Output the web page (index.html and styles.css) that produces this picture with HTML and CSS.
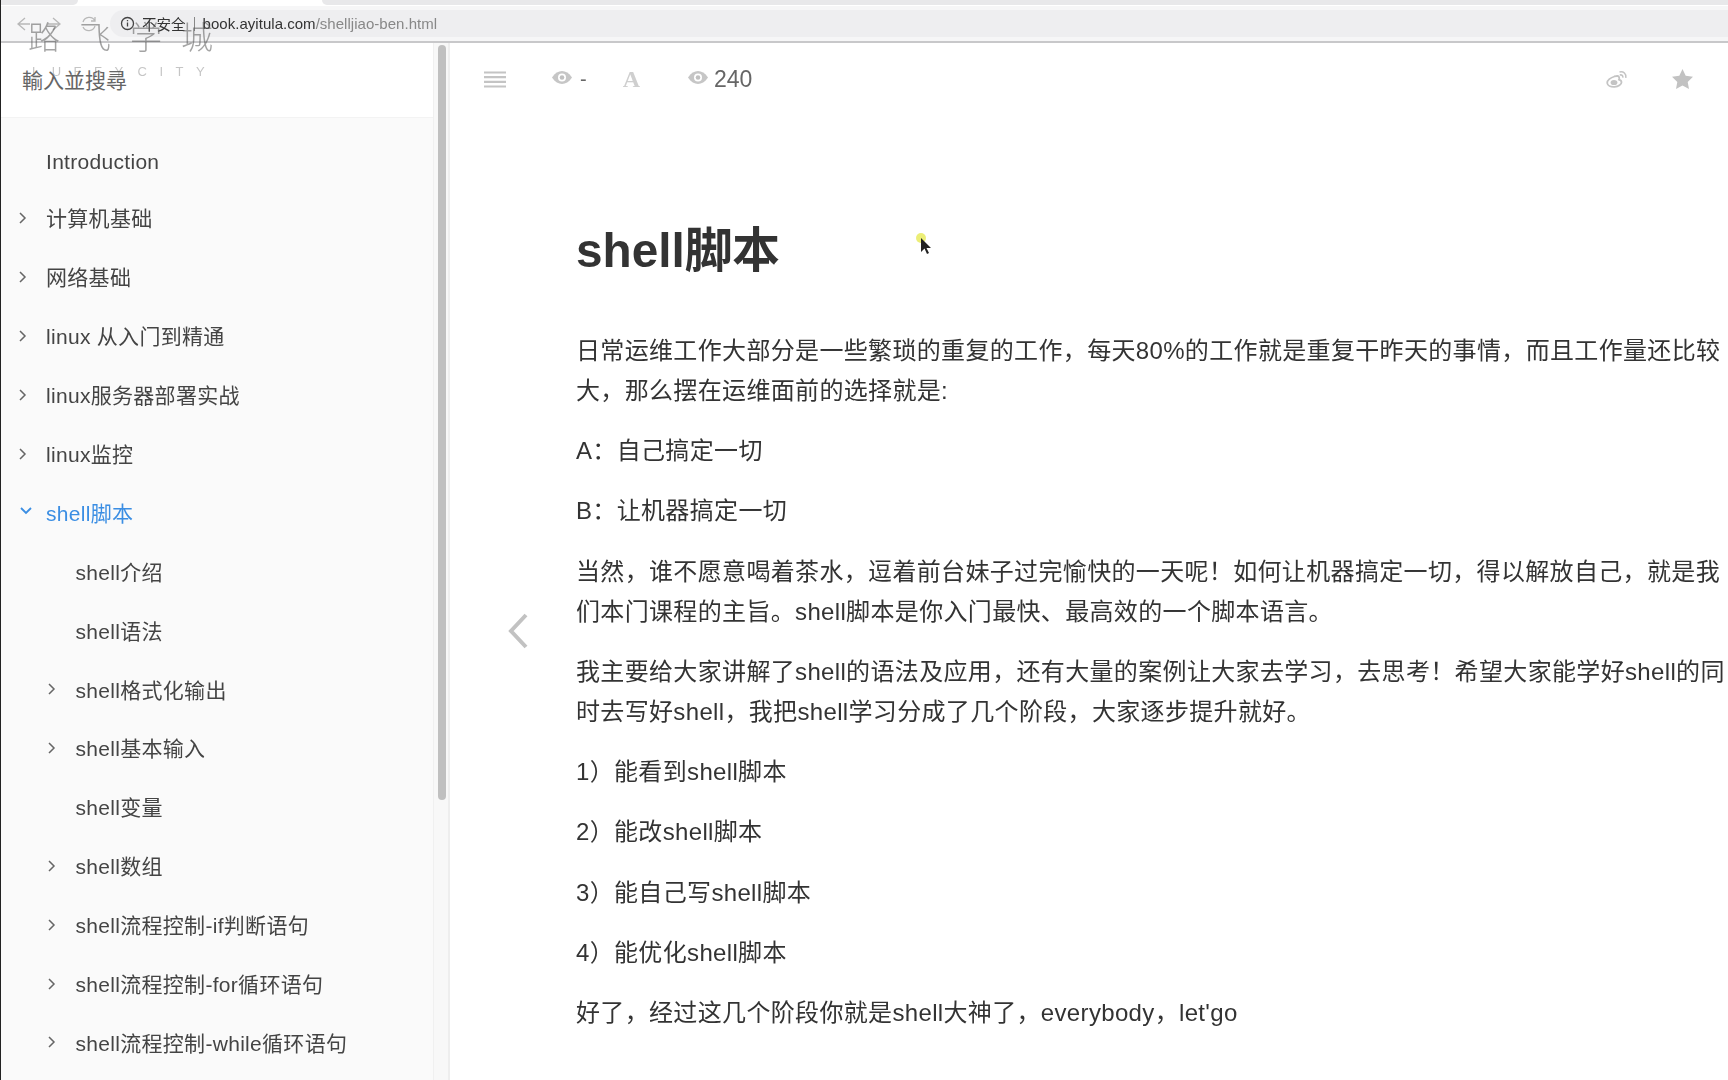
FILE: index.html
```html
<!DOCTYPE html>
<html lang="zh">
<head>
<meta charset="utf-8">
<title>shell脚本</title>
<link rel="stylesheet" href="styles.css">
</head>
<body>
<header class="chrome">
  <div class="tabstrip"><span class="tab tab-a"></span><span class="tab tab-b"></span></div>
  <div class="toolbar">
    <div class="navbtns">
      <svg class="nav-ic" width="46" height="16" viewBox="0 0 46 16"><path d="M9 2 2 8l7 6M2 8h12M37 2l7 6-7 6M44 8H32" fill="none" stroke="#b8b8b8" stroke-width="1.3"/></svg>
      <svg class="nav-ic" width="18" height="16" viewBox="0 0 18 16"><path d="M15 5A6.5 6.5 0 0 0 3 6M15 1v4h-4M3 11a6.500 6.500 0 0 0 12-1" fill="none" stroke="#b8b8b8" stroke-width="1.3"/></svg>
    </div>
    <div class="omnibox">
      <svg width="15" height="15" viewBox="0 0 15 15"><circle cx="7.500" cy="7.500" r="6" fill="none" stroke="#444" stroke-width="1.300"/><path d="M7.500 6.500v4M7.500 4v1.300" stroke="#444" stroke-width="1.300"/></svg>
      <span class="insecure">不安全</span><span class="sep"></span>
      <span class="url"><b>book.ayitula.com</b>/shelljiao-ben.html</span>
    </div>
  </div>
</header>

<div class="book">
  <aside class="sidebar">
    <div class="search">輸入並搜尋</div>
    <ul class="summary">
      <li class="item first"><span class="label">Introduction</span></li>
      <li class="item has"><svg class="chev" viewBox="0 0 10 14"><path d="M2 2l5 5-5 5"/></svg><span class="label">计算机基础</span></li>
      <li class="item has"><svg class="chev" viewBox="0 0 10 14"><path d="M2 2l5 5-5 5"/></svg><span class="label">网络基础</span></li>
      <li class="item has"><svg class="chev" viewBox="0 0 10 14"><path d="M2 2l5 5-5 5"/></svg><span class="label">linux 从入门到精通</span></li>
      <li class="item has"><svg class="chev" viewBox="0 0 10 14"><path d="M2 2l5 5-5 5"/></svg><span class="label">linux服务器部署实战</span></li>
      <li class="item has"><svg class="chev" viewBox="0 0 10 14"><path d="M2 2l5 5-5 5"/></svg><span class="label">linux监控</span></li>
      <li class="item has active"><svg class="chev down" viewBox="0 0 14 10"><path d="M2 2l5 5 5-5"/></svg><span class="label">shell脚本</span></li>
      <li class="item sub"><span class="label">shell介绍</span></li>
      <li class="item sub"><span class="label">shell语法</span></li>
      <li class="item sub has"><svg class="chev" viewBox="0 0 10 14"><path d="M2 2l5 5-5 5"/></svg><span class="label">shell格式化输出</span></li>
      <li class="item sub has"><svg class="chev" viewBox="0 0 10 14"><path d="M2 2l5 5-5 5"/></svg><span class="label">shell基本输入</span></li>
      <li class="item sub"><span class="label">shell变量</span></li>
      <li class="item sub has"><svg class="chev" viewBox="0 0 10 14"><path d="M2 2l5 5-5 5"/></svg><span class="label">shell数组</span></li>
      <li class="item sub has"><svg class="chev" viewBox="0 0 10 14"><path d="M2 2l5 5-5 5"/></svg><span class="label">shell流程控制-if判断语句</span></li>
      <li class="item sub has"><svg class="chev" viewBox="0 0 10 14"><path d="M2 2l5 5-5 5"/></svg><span class="label">shell流程控制-for循环语句</span></li>
      <li class="item sub has"><svg class="chev" viewBox="0 0 10 14"><path d="M2 2l5 5-5 5"/></svg><span class="label">shell流程控制-while循环语句</span></li>
    </ul>
  </aside>
  <div class="scrolltrack"><div class="scrollthumb"></div></div>

  <main class="page">
    <div class="topbar">
      <div class="tools">
        <svg class="ic-menu" width="22" height="17" viewBox="0 0 22 17"><path d="M0 1.500h22M0 6.200h22M0 10.800h22M0 15.500h22" stroke="#c4c4c4" stroke-width="2.200"/></svg>
        <span class="stat stat-a">
          <svg width="20" height="13" viewBox="0 0 20 13"><path d="M0 6.500C3 2 6.500 0 10 0s7 2 10 6.500C17 11 13.500 13 10 13S3 11 0 6.500z" fill="#c6c6c6"/><circle cx="10" cy="6.500" r="4" fill="#fff"/><circle cx="10" cy="6.500" r="2.300" fill="#c0c0c0"/></svg>
          <span class="stat-text">-</span>
        </span>
        <span class="font-a">A</span>
        <span class="stat stat-b">
          <svg width="20" height="13" viewBox="0 0 20 13"><path d="M0 6.500C3 2 6.500 0 10 0s7 2 10 6.500C17 11 13.500 13 10 13S3 11 0 6.500z" fill="#c6c6c6"/><circle cx="10" cy="6.500" r="4" fill="#fff"/><circle cx="10" cy="6.500" r="2.300" fill="#c0c0c0"/></svg>
          <span class="stat-text big">240</span>
        </span>
      </div>
      <div class="tools-right">
        <svg width="22" height="18" viewBox="0 0 22 18"><path d="M8.500 6.500C4.500 7.500 1 10.500 1.200 13c.2 2.500 3.500 4 7.300 3.800 4-.2 7-2.300 7-4.600 0-1.500-1.400-2.200-2.500-2.500.6-1.500.3-3.500-1.500-3.700-1-.1-2.300.2-3.500.5z" fill="none" stroke="#c4c4c4" stroke-width="1.800"/><ellipse cx="8" cy="12.500" rx="3.400" ry="2.600" fill="#c4c4c4"/><path d="M13.500 2c4-1 7 1.800 6.300 5.800M13.800 5c2-.5 3.300.7 3 2.600" fill="none" stroke="#c4c4c4" stroke-width="1.600"/></svg>
        <svg width="21" height="20" viewBox="0 0 21 20"><path d="M10.500 0l3.200 6.800 7.300 1-5.300 5.100 1.300 7.100-6.500-3.500L4 20l1.300-7.100L0 7.800l7.300-1z" fill="#c2c2c2"/></svg>
      </div>
    </div>

    <article class="content">
      <h1>shell脚本</h1>
      <p>日常运维工作大部分是一些繁琐的重复的工作，每天80%的工作就是重复干昨天的事情，而且工作量还比较大，那么摆在运维面前的选择就是:</p>
      <p>A：自己搞定一切</p>
      <p>B：让机器搞定一切</p>
      <p>当然，谁不愿意喝着茶水，逗着前台妹子过完愉快的一天呢！如何让机器搞定一切，得以解放自己，就是我们本门课程的主旨。shell脚本是你入门最快、最高效的一个脚本语言。</p>
      <p>我主要给大家讲解了shell的语法及应用，还有大量的案例让大家去学习，去思考！希望大家能学好shell的同时去写好shell，我把shell学习分成了几个阶段，大家逐步提升就好。</p>
      <p>1）能看到shell脚本</p>
      <p>2）能改shell脚本</p>
      <p>3）能自己写shell脚本</p>
      <p>4）能优化shell脚本</p>
      <p>好了，经过这几个阶段你就是shell大神了，everybody，let'go</p>
    </article>

    <svg class="prev" width="22" height="38" viewBox="0 0 22 38"><path d="M19 3 4 19l15 16" fill="none" stroke="#c2c2c2" stroke-width="4"/></svg>
    <div class="cursor">
      <svg width="18" height="24" viewBox="0 0 18 24"><circle cx="5" cy="5" r="5" fill="#e6e84a" opacity=".75"/><path d="M5 5v14l3.500-3.500L11 21l2-1-2.500-5H15z" fill="#222"/></svg>
    </div>
  </main>
</div>

<div class="watermark">
  <div class="wm-cn"><span>路</span><span>飞</span><span>学</span><span>城</span></div>
  <div class="wm-en">LUFFY CITY</div>
</div>
</body>
</html>
```
FILE: styles.css
```css
* { box-sizing: border-box; }
html, body { margin: 0; height: 1080px; overflow: hidden; }
body {
  width: 1728px;
  background: #fff;
  color: #333;
  font-family: "Liberation Sans", "Noto Sans CJK SC", sans-serif;
  display: flex;
  flex-direction: column;
  border-left: 1px solid #222;
  position: relative;
  filter: blur(.4px);
}
.chrome { height: 43px; flex: none; background: #f6f6f7; border-bottom: 2px solid #c8c8ca; }
.tabstrip { height: 6px; display: flex; justify-content: space-between; background: #fff; }
.tab { display: block; height: 5px; background: #e8e8ea; }
.tab-a { width: 77px; border-radius: 0 0 8px 0; }
.tab-b { flex: 1; margin-left: 244px; border-radius: 0 0 0 8px; }
.toolbar { display: flex; align-items: center; height: 35px; }
.navbtns { display: flex; gap: 18px; align-items: center; padding-left: 15px; width: 109px; }
.nav-ic { flex: none; }
.omnibox {
  flex: 1; height: 27px; background: #eeeef0; border-radius: 14px 0 0 14px;
  display: flex; align-items: center; padding-left: 10px; font-size: 15px; letter-spacing: .03px; color: #333;
}
.insecure { margin-left: 7px; font-size: 14.500px; }
.sep { width: 1px; height: 14px; background: #888; margin: 0 8px; }
.url { color: #888; }
.url b { color: #333; font-weight: 400; }

.book { flex: 1; display: flex; min-height: 0; }
.sidebar { width: 433px; flex: none; background: #fafafa; overflow: hidden; border-right: 1px solid #f0f0f0; }
.search { height: 75px; background: #fff; border-bottom: 1px solid #f3f3f3; padding: 24px 21px 0; font-size: 21px; line-height: 28px; color: #666; }
.summary { list-style: none; margin: 0; padding: 18.300px 0 0; }
.item { height: 58.900px; display: flex; align-items: center; padding-left: 45px; position: relative; font-size: 21px; letter-spacing: .3px; color: #444; white-space: nowrap; }
.item.first { height: 51.700px; }
.item.sub { padding-left: 74.500px; }
.item.active { color: #3b8ee3; }
.chev { position: absolute; left: 17px; top: 23px; width: 10px; height: 14px; fill: none; stroke: #666; stroke-width: 1.500; }
.sub .chev { left: 46px; }
.chev.down { left: 18px; top: 24px; width: 14px; height: 10px; stroke: #3b8ee3; stroke-width: 1.800; }

.scrolltrack { width: 16px; flex: none; background: #f8f8f8; border-right: 2px solid #eeeeee; padding: 2px 4px 0; }
.scrollthumb { width: 8px; height: 755px; background: #c0c0c0; border-radius: 4px; }

.page { flex: 1; position: relative; min-width: 0; }
.topbar { height: 72px; display: flex; justify-content: space-between; align-items: center; padding: 0 35px 0 34px; }
.tools { display: flex; align-items: center; }
.ic-menu { margin-right: 46px; }
.stat { display: flex; align-items: center; gap: 8px; }
.stat-b { gap: 6px; }
.stat svg { margin-top: -4px; }
.stat-text { font-size: 20px; color: #666; line-height: 24px; }
.stat-text.big { font-size: 23px; }
.stat-a { margin-right: 36px; }
.font-a { font-family: "Liberation Serif", serif; font-weight: 700; font-size: 24px; color: #cfcfcf; margin-right: 48px; }
.tools-right { display: flex; align-items: center; gap: 44px; }

.content { padding: 102.500px 0 0 126px; }
h1 { margin: 0 0 47.500px; font-size: 47.700px; line-height: 66px; font-weight: 700; color: #333; }
.content p { margin: 0 0 19.950px; font-size: 24px; letter-spacing: .34px; line-height: 40.200px; color: #333; }
.prev { position: absolute; left: 57px; top: 569px; }
.cursor { position: absolute; left: 466px; top: 190px; line-height: 0; }

.watermark { position: absolute; left: 27px; top: 16px; color: rgba(90,90,90,.55); pointer-events: none; }
.wm-cn { display: flex; gap: 19px; font-size: 32px; line-height: 44px; font-weight: 300; }
.wm-en { font-size: 13px; letter-spacing: 12.500px; word-spacing: -14px; margin-top: 4px; padding-left: 4px; line-height: 16px; color: rgba(90,90,90,.35); white-space: nowrap; }
```
